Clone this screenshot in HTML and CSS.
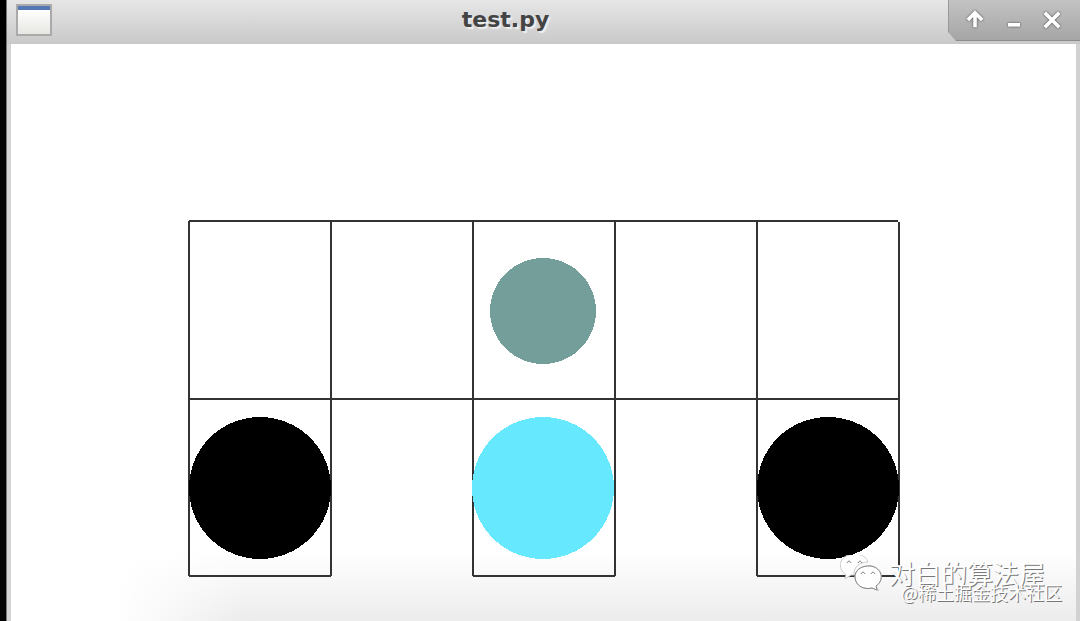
FILE: index.html
```
<!DOCTYPE html>
<html lang="zh-CN">
<head>
  <meta charset="UTF-8">
  <title>test.py</title>
  <link rel="stylesheet" href="styles.css">
</head>
<body>

  <div class="window">
    <!-- Title bar -->
    <header class="titlebar">
      <span class="app-icon"></span>
      <h1 class="title">test.py</h1>
      <div class="controls">
        <button class="control" type="button" aria-label="Roll up">
          <svg viewBox="0 0 20 20"><path d="M10 16V5M4 10l6-6 6 6" /></svg>
        </button>
        <button class="control" type="button" aria-label="Minimize">
          <svg viewBox="0 0 20 20"><path d="M5 14h10" /></svg>
        </button>
        <button class="control" type="button" aria-label="Close">
          <svg viewBox="0 0 20 20"><path d="M4 4l12 12M16 4L4 16" /></svg>
        </button>
      </div>
    </header>

    <!-- Maze -->
    <main class="canvas">
      <svg class="maze" viewBox="0 0 1065 577">
        <path class="wall" d="M178 177H887M178 355H888M178 532H320M462 532H604M746 532H888" />
        <path class="wall" d="M178 177V532M320 177V532M462 177V532M604 177V532M746 177V532M888 178V532" />
        <circle class="trap" cx="249" cy="444" r="71" />
        <circle class="trap" cx="817" cy="444" r="71" />
        <circle class="gold" cx="532" cy="444" r="71" />
        <circle class="robot" cx="532" cy="267" r="53" />
      </svg>

      <div class="watermark">
        <div class="account">
          <svg class="bubbles" viewBox="0 0 44 36">
            <path class="bubble" d="M7 20C-1 14 0 5 7 1c8-4 20-2 22 6-9 0-15 6-14 13l-3 0-6 4z" />
            <path class="bubble" d="M37 31c9-6 6-18-5-20-10-1-17 5-16 12 1 8 9 12 17 10l7 3z" />
            <path class="line" d="M37 31c9-6 6-18-5-20-10-1-17 5-16 12 1 8 9 12 17 10l5 2z" />
            <path class="line" d="M8 8q2-4 4 0M19 8q2-4 4 0M22 19q2-4 4 0M32 19q2-4 4 0" />
          </svg>
          <span>对白的算法屋</span>
        </div>
        <div class="community">@稀土掘金技术社区</div>
      </div>
    </main>
  </div>

</body>
</html>
```
FILE: styles.css
```
* {
  box-sizing: border-box;
}

body {
  margin: 0;
  padding-left: 6px;
  background: #000;
  font-family: "DejaVu Sans", sans-serif;
}

.window {
  min-height: 100vh;
  display: flex;
  flex-direction: column;
  background: #d2d2d2;
  border-left: 1px solid #777;
}

.titlebar {
  height: 44px;
  display: grid;
  grid-template-columns: 132px 1fr 132px;
  background: linear-gradient(#e6e6e6, #c9c9c9);
}

.app-icon {
  width: 36px;
  height: 32px;
  margin: 4px 9px;
  border: 2px solid #aaa;
  background: linear-gradient(#5478b4 4px, #fff 4px, #e6e6e2);
}

.title {
  margin: 0;
  padding-right: 76px;
  text-align: center;
  font-size: 22px;
  line-height: 40px;
  color: #444;
  text-shadow: 2px 2px 1px #eee;
}

.controls {
  height: 41px;
  padding-right: 2px;
  display: flex;
  align-items: center;
  justify-content: space-evenly;
  background: linear-gradient(#c3c3c3, #a5a5a5);
  border-left: 1px solid #999;
  border-bottom: 1px solid #8c8c8c;
  clip-path: polygon(0 0, 100% 0, 100% 100%, 8px 100%, 0 32px);
}

.control {
  width: 24px;
  height: 24px;
  padding: 0;
  border: 0;
  background: none;
}

.control svg {
  display: block;
  fill: none;
  stroke: #fff;
  stroke-width: 3;
  filter: drop-shadow(0 0 1px #444);
}

.canvas {
  flex: 1;
  position: relative;
  margin: 0 4px;
  background:
    linear-gradient(90deg, #fff 10%, transparent 22%),
    linear-gradient(#fff 88%, #ececec);
}

.maze {
  display: block;
  width: 100%;
  height: auto;
}

.wall {
  fill: none;
  stroke: #333;
  stroke-width: 2;
}

.trap,
.gold,
.robot {
  shape-rendering: crispEdges;
}

.trap {
  fill: #000;
}

.gold {
  fill: #66e8ff;
}

.robot {
  fill: #739e99;
}

.watermark {
  position: absolute;
  right: 14px;
  bottom: 20px;
  text-align: right;
  font-family: "Noto Sans CJK SC", sans-serif;
  color: #fff;
  text-shadow: 1px 1px 0 #777;
}

.account {
  display: flex;
  align-items: center;
  justify-content: flex-end;
  gap: 6px;
  padding-right: 17px;
  font-size: 26px;
  line-height: 26px;
}

.bubbles {
  width: 44px;
  height: 36px;
}

.bubble {
  fill: #fff;
  stroke: #ccc;
}

.line {
  fill: none;
  stroke: #888;
}

.community {
  margin-top: -8px;
  font-size: 18px;
  line-height: 18px;
}
```
